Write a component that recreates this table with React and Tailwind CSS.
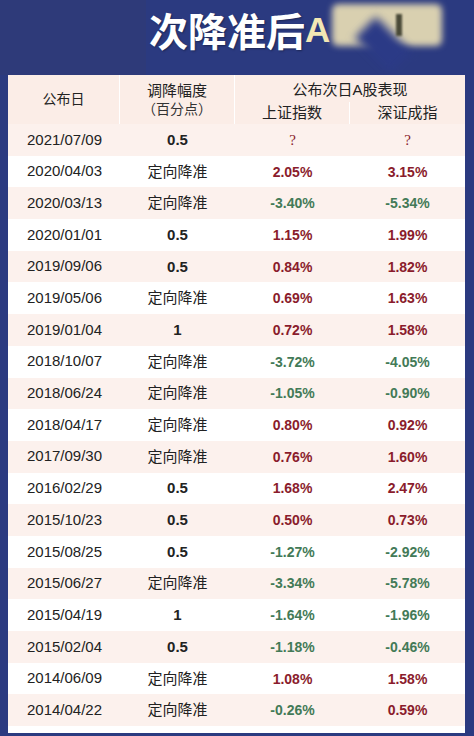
import React from "react";

const rows = [
  ["2021/07/09", "0.5", "?", "?"],
  ["2020/04/03", "定向降准", "2.05%", "3.15%"],
  ["2020/03/13", "定向降准", "-3.40%", "-5.34%"],
  ["2020/01/01", "0.5", "1.15%", "1.99%"],
  ["2019/09/06", "0.5", "0.84%", "1.82%"],
  ["2019/05/06", "定向降准", "0.69%", "1.63%"],
  ["2019/01/04", "1", "0.72%", "1.58%"],
  ["2018/10/07", "定向降准", "-3.72%", "-4.05%"],
  ["2018/06/24", "定向降准", "-1.05%", "-0.90%"],
  ["2018/04/17", "定向降准", "0.80%", "0.92%"],
  ["2017/09/30", "定向降准", "0.76%", "1.60%"],
  ["2016/02/29", "0.5", "1.68%", "2.47%"],
  ["2015/10/23", "0.5", "0.50%", "0.73%"],
  ["2015/08/25", "0.5", "-1.27%", "-2.92%"],
  ["2015/06/27", "定向降准", "-3.34%", "-5.78%"],
  ["2015/04/19", "1", "-1.64%", "-1.96%"],
  ["2015/02/04", "0.5", "-1.18%", "-0.46%"],
  ["2014/06/09", "定向降准", "1.08%", "1.58%"],
  ["2014/04/22", "定向降准", "-0.26%", "0.59%"],
];

const font = { fontFamily: '"Liberation Sans", "Noto Sans CJK SC", sans-serif' };

function Pct({ v }) {
  if (v === "?") {
    return (
      <span className="text-[15px] text-[#8a1c2c]" style={{ fontFamily: '"Liberation Serif", serif' }}>
        ?
      </span>
    );
  }
  const neg = v.startsWith("-");
  return (
    <span className={`text-[14px] font-bold ${neg ? "text-[#437a57]" : "text-[#8a1c2c]"}`}>{v}</span>
  );
}

export default function App() {
  return (
    <div className="w-[474px] h-[736px] bg-[#2b3a80] flex flex-col overflow-hidden" style={font}>
      {/* Title band */}
      <div className="h-[75px] flex shrink-0">
        <div className="w-[146px] h-full bg-[#2e3a79]" />
        <div className="flex-1 h-full flex items-start pt-[4px] pl-[3px] relative">
          <span
            className="text-[39px] font-bold text-white leading-[50px]"
            style={{ fontFamily: '"Noto Sans CJK SC", sans-serif', textShadow: "1px 1px 2px rgba(0,0,0,0.35)" }}
          >
            次降准后
          </span>
          <span className="text-[35px] font-bold text-[#f3e7b4] leading-[52px]" style={{ fontFamily: '"Liberation Sans", sans-serif' }}>
            A
          </span>
          <div className="absolute left-[186px] top-[4px] w-[110px] h-[42px] bg-[#d9d0b0] blur-[3px] rounded-[6px]" />
          <div className="absolute left-[212px] top-[30px] w-[50px] h-[30px] bg-[#2b3a86] blur-[4px] rotate-45" />
          <div className="absolute left-[250px] top-[14px] w-[6px] h-[22px] bg-[#4a4a38] blur-[1px]" />
        </div>
      </div>

      {/* Card */}
      <div className="ml-[8px] mr-[9px] h-[658px] bg-white flex flex-col relative">
        {/* Header */}
        <div className="h-[49px] bg-[#fbede7] flex text-[#222] shrink-0">
          <div className="w-[112px] flex items-center justify-center text-[14px] border-r border-white">公布日</div>
          <div className="w-[115px] flex flex-col items-center justify-center text-[15px] leading-[18px] border-r border-white">
            <span>调降幅度</span>
            <span className="text-[14px] text-[#333]">（百分点）</span>
          </div>
          <div className="flex-1 flex flex-col">
            <div className="h-[24px] flex items-end justify-center text-[15px] leading-[18px]">公布次日A股表现</div>
            <div className="flex-1 flex text-[15px] pt-[3px]">
              <div className="w-[115px] flex items-center justify-center border-r border-white">上证指数</div>
              <div className="flex-1 flex items-center justify-center">深证成指</div>
            </div>
          </div>
        </div>

        {/* Rows */}
        <div className="flex flex-col">
          {rows.map((r, i) => (
            <div
              key={r[0]}
              className={`h-[31.7px] flex items-center text-[#222] ${i % 2 === 0 ? "bg-[#fcf1ed]" : "bg-white"}`}
            >
              <div className="w-[112px] text-center text-[15px] pl-[1px]">{r[0]}</div>
              <div className="w-[115px] text-center">
                {r[1] === "定向降准" ? (
                  <span className="text-[15px]">{r[1]}</span>
                ) : (
                  <span className="text-[15px] font-bold">{r[1]}</span>
                )}
              </div>
              <div className="w-[115px] text-center">
                <Pct v={r[2]} />
              </div>
              <div className="flex-1 text-center">
                <Pct v={r[3]} />
              </div>
            </div>
          ))}
        </div>
      </div>
    </div>
  );
}
